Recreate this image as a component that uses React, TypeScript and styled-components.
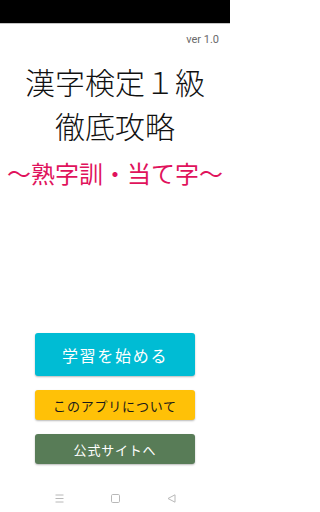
import React from 'react';
import styled, { createGlobalStyle } from 'styled-components';

const CJK = '"Noto Sans CJK JP", "Noto Sans", sans-serif';

const GlobalStyle = createGlobalStyle`
  html, body { margin: 0; padding: 0; background: #fff; }
  body { font-family: ${CJK}; }
  #root { height: 512px; }
`;

const Screen = styled.div`
  width: 230px; height: 512px; display: flex; flex-direction: column;
  background: #fff; overflow: hidden;
`;
const StatusBar = styled.div`
  height: 23px; background: #000; border-bottom: 1px solid #c4c4c4; flex: none;
`;
const Version = styled.div`
  font-family: Roboto, "Liberation Sans", sans-serif; font-size: 11px; line-height: 14px;
  color: #6a6a6a; text-align: right; padding: 9px 11px 0 0;
`;
const Title = styled.h1`
  margin: 12px 0 0; font-family: ${CJK}; font-weight: 300; font-size: 30px; line-height: 44px;
  color: #111; text-align: center;
`;
const Subtitle = styled.div`
  margin-top: 11px; font-family: ${CJK}; font-weight: 400; font-size: 24px; line-height: 30px;
  color: #e0125c; text-align: center; white-space: nowrap;
`;
const Buttons = styled.div`
  margin-top: auto; margin-bottom: 20px; display: flex; flex-direction: column;
  align-items: center; gap: 14px;
`;
const Button = styled.button<{ $bg: string; $fg: string; $big?: boolean }>`
  width: 160px; height: ${p => p.$big ? 43 : 30}px; border: none; border-radius: 3px;
  background: ${p => p.$bg}; color: ${p => p.$fg};
  font-family: ${CJK}; font-size: ${p => p.$big ? 16 : 13}px;
  letter-spacing: ${p => p.$big ? 1.7 : 0.8}px; padding: 0;
  display: flex; align-items: center; justify-content: center;
  box-shadow: 0 1px 2px rgba(0,0,0,0.28);
  cursor: pointer;
`;
const NavBar = styled.div`
  height: 28px; flex: none; display: flex; align-items: center; justify-content: center; gap: 47px;
`;
const NavIcon = styled.svg`
  width: 9px; height: 9px; display: block;
`;

export default function App() {
  return (
    <>
      <GlobalStyle />
      <Screen>
        <StatusBar />
        <Version>ver 1.0</Version>
        <Title>漢字検定１級<br />徹底攻略</Title>
        <Subtitle>～熟字訓・当て字～</Subtitle>
        <Buttons>
          <Button $big $bg="#00bcd4" $fg="#fff">学習を始める</Button>
          <Button $bg="#ffc107" $fg="#1a1a1a">このアプリについて</Button>
          <Button $bg="#587c57" $fg="#fff">公式サイトへ</Button>
        </Buttons>
        <NavBar>
          <NavIcon viewBox="0 0 9 9" fill="none" stroke="#b8b8b8" strokeWidth="1">
            <path d="M0.5 1h8M0.5 4.5h8M0.5 8h8" />
          </NavIcon>
          <NavIcon viewBox="0 0 9 9" fill="none" stroke="#b8b8b8" strokeWidth="1">
            <rect x="0.5" y="0.5" width="8" height="8" rx="1.2" />
          </NavIcon>
          <NavIcon viewBox="0 0 9 9" fill="none" stroke="#b8b8b8" strokeWidth="1">
            <path d="M8 0.8v7.4L1 4.5z" strokeLinejoin="round" />
          </NavIcon>
        </NavBar>
      </Screen>
    </>
  );
}
